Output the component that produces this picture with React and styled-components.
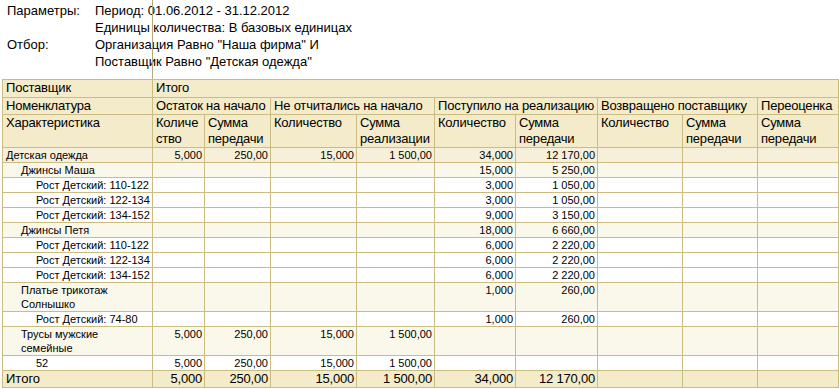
import React from 'react'
import styled, { createGlobalStyle } from 'styled-components'

const GlobalStyle = createGlobalStyle`
    html, body{
        margin: 0;
        padding: 0;
        background: #ffffff;
    }
    body{
        font-family: "Liberation Sans", Arial, sans-serif;
        color: #000000;
    }
`;

const cols = [150, 52, 66, 86, 78, 81, 82, 85, 75, 81];

const rows = [
    { label: 'Детская одежда', level: 0, kind: 'top', v: ['5,000', '250,00', '15,000', '1 500,00', '34,000', '12 170,00'] },
    { label: 'Джинсы Маша', level: 1, kind: 'group', v: ['', '', '', '', '15,000', '5 250,00'] },
    { label: 'Рост Детский: 110-122', level: 2, kind: 'item', v: ['', '', '', '', '3,000', '1 050,00'] },
    { label: 'Рост Детский: 122-134', level: 2, kind: 'item', v: ['', '', '', '', '3,000', '1 050,00'] },
    { label: 'Рост Детский: 134-152', level: 2, kind: 'item', v: ['', '', '', '', '9,000', '3 150,00'] },
    { label: 'Джинсы Петя', level: 1, kind: 'group', v: ['', '', '', '', '18,000', '6 660,00'] },
    { label: 'Рост Детский: 110-122', level: 2, kind: 'item', v: ['', '', '', '', '6,000', '2 220,00'] },
    { label: 'Рост Детский: 122-134', level: 2, kind: 'item', v: ['', '', '', '', '6,000', '2 220,00'] },
    { label: 'Рост Детский: 134-152', level: 2, kind: 'item', v: ['', '', '', '', '6,000', '2 220,00'] },
    { label: 'Платье трикотаж\nСолнышко', level: 1, kind: 'group', v: ['', '', '', '', '1,000', '260,00'] },
    { label: 'Рост Детский: 74-80', level: 2, kind: 'item', v: ['', '', '', '', '1,000', '260,00'] },
    { label: 'Трусы мужские\nсемейные', level: 1, kind: 'group', v: ['5,000', '250,00', '15,000', '1 500,00', '', ''] },
    { label: '52', level: 2, kind: 'item', v: ['5,000', '250,00', '15,000', '1 500,00', '', ''] },
];

const totals = ['5,000', '250,00', '15,000', '1 500,00', '34,000', '12 170,00', '', '', ''];

const rowBg = {
    top: '#f6f0da',
    group: '#faf7eb',
    item: '#ffffff',
};

function pad(values) {
    const out = [...values];
    while (out.length < 9) out.push('');
    return out;
}

function Report() {
    return (
        <Page>
            <Params>
                <ParamLabel>Параметры:</ParamLabel>
                <ParamValue>Период: 01.06.2012 - 31.12.2012</ParamValue>
                <ParamLabel />
                <ParamValue>Единицы количества: В базовых единицах</ParamValue>
                <ParamLabel>Отбор:</ParamLabel>
                <ParamValue>Организация Равно "Наша фирма" И</ParamValue>
                <ParamLabel />
                <ParamValue>Поставщик Равно "Детская одежда"</ParamValue>
                <Splitter />
            </Params>

            <Table>
                <colgroup>
                    {cols.map((w, i) => <col key={i} style={{ width: w }} />)}
                </colgroup>
                <thead>
                    <HeadRow $h={18}>
                        <Th $nowrap>Поставщик</Th>
                        <Th $nowrap colSpan={9}>Итого</Th>
                    </HeadRow>
                    <HeadRow $h={16}>
                        <Th $nowrap>Номенклатура</Th>
                        <Th $nowrap colSpan={2}>Остаток на начало</Th>
                        <Th $nowrap colSpan={2}>Не отчитались на начало</Th>
                        <Th $nowrap colSpan={2}>Поступило на реализацию</Th>
                        <Th $nowrap colSpan={2}>Возвращено поставщику</Th>
                        <Th $nowrap>Переоценка</Th>
                    </HeadRow>
                    <HeadRow $h={33}>
                        <Th>Характеристика</Th>
                        <Th $breakAll>Количество</Th>
                        <Th>Сумма передачи</Th>
                        <Th>Количество</Th>
                        <Th>Сумма реализации</Th>
                        <Th>Количество</Th>
                        <Th>Сумма передачи</Th>
                        <Th>Количество</Th>
                        <Th>Сумма передачи</Th>
                        <Th>Сумма передачи</Th>
                    </HeadRow>
                </thead>
                <tbody>
                    {rows.map((r, i) => (
                        <DataRow key={i} $bg={rowBg[r.kind]}>
                            <NameCell $level={r.level}>{r.label}</NameCell>
                            {pad(r.v).map((v, j) => <NumCell key={j}>{v}</NumCell>)}
                        </DataRow>
                    ))}
                    <TotalRow>
                        <TotalName>Итого</TotalName>
                        {totals.map((v, j) => <TotalNum key={j}>{v}</TotalNum>)}
                    </TotalRow>
                </tbody>
            </Table>
        </Page>
    )
}

export default function App() {
    return (
        <>
            <GlobalStyle />
            <Report />
        </>
    )
}

const Page = styled.div`
    width: 839px;
    height: 389px;
    overflow: hidden;
    position: relative;
`;

const Params = styled.div`
    position: relative;
    display: grid;
    grid-template-columns: 88px auto;
    grid-auto-rows: 17px;
    align-content: start;
    padding: 2px 0 0 7px;
    height: 79px;
    box-sizing: border-box;
    font-size: 13px;
    line-height: 17px;
    color: #000;
`;

const ParamLabel = styled.div`
    white-space: nowrap;
`;

const ParamValue = styled.div`
    white-space: nowrap;
`;

const Splitter = styled.div`
    position: absolute;
    left: 152px;
    top: 0;
    bottom: 0;
    width: 1px;
    background: #b6a878;
`;

const Table = styled.table`
    margin-left: 2px;
    width: 836px;
    border-collapse: collapse;
    table-layout: fixed;
    border: 1px solid #cbbd82;
`;

const HeadRow = styled.tr`
    height: ${p => p.$h}px;
    background: #f3ebc9;
`;

const Th = styled.td`
    border: 1px solid #cbbd82;
    padding: 0 0 0 3px;
    font-size: 13px;
    line-height: 16px;
    letter-spacing: -0.2px;
    font-weight: normal;
    text-align: left;
    vertical-align: top;
    white-space: ${p => p.$nowrap ? 'nowrap' : 'normal'};
    overflow: hidden;
    word-break: ${p => p.$breakAll ? 'break-all' : 'normal'};
`;

const DataRow = styled.tr`
    background: ${p => p.$bg};
`;

const NameCell = styled.td`
    border: 1px solid #cbbd82;
    padding: 0 2px 0 ${p => 3 + p.$level * 15}px;
    font-size: 11px;
    line-height: 14px;
    vertical-align: top;
    white-space: pre-line;
`;

const NumCell = styled.td`
    border: 1px solid #cbbd82;
    padding: 0 2px;
    font-size: 11px;
    line-height: 14px;
    text-align: right;
    vertical-align: top;
    white-space: nowrap;
`;

const TotalRow = styled.tr`
    background: #f3ebc9;
    height: 17px;
`;

const TotalName = styled.td`
    border: 1px solid #cbbd82;
    padding: 0 3px;
    font-size: 13px;
    line-height: 16px;
`;

const TotalNum = styled.td`
    border: 1px solid #cbbd82;
    padding: 0 2px;
    font-size: 13px;
    line-height: 16px;
    letter-spacing: -0.2px;
    text-align: right;
    white-space: nowrap;
`;
